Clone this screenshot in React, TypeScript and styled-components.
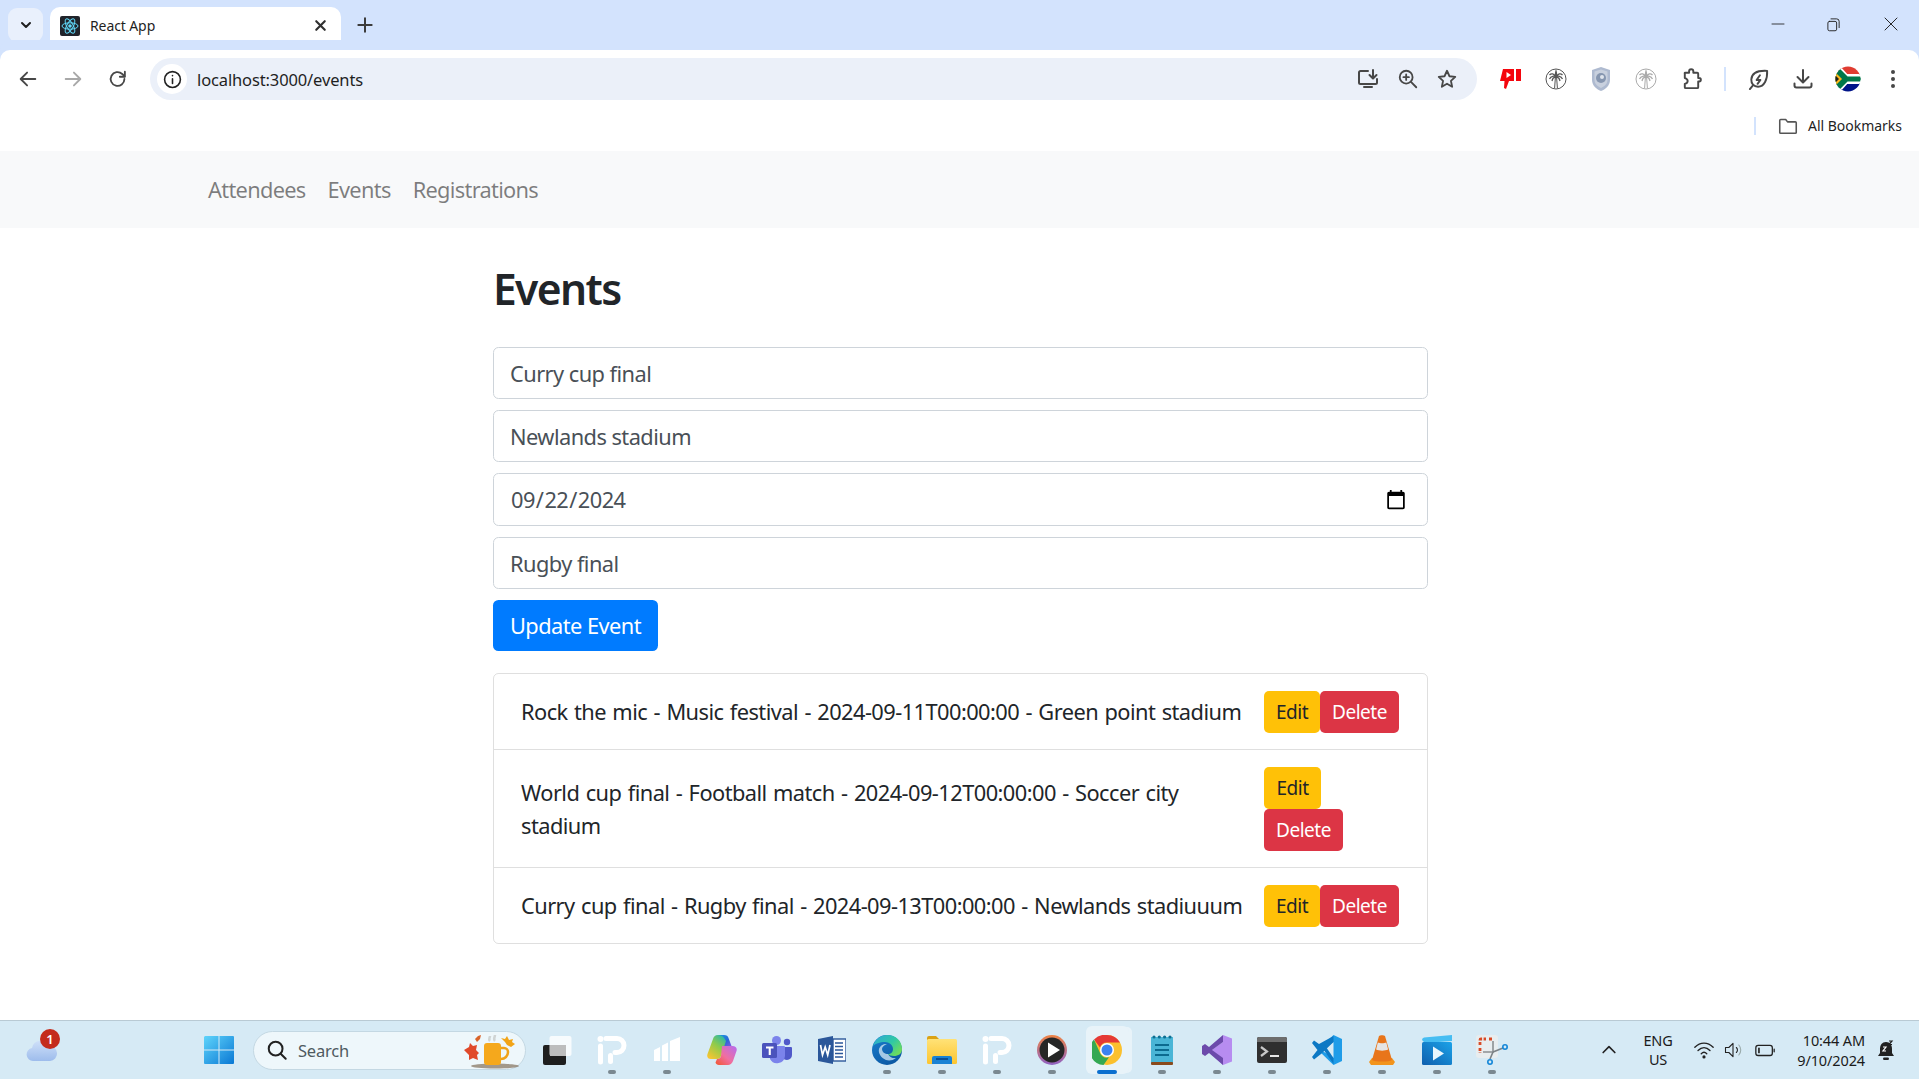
import React from 'react';
import styled, { createGlobalStyle } from 'styled-components';

const FONT = `"Noto Sans", "Open Sans", "Liberation Sans", sans-serif`;

const Global = createGlobalStyle`
  html, body { margin: 0; padding: 0; height: 100%; background: #fff; overflow: hidden; }
  #root { height: 100%; }
  * { box-sizing: border-box; }
  body { font-family: ${FONT}; }
`;

const Screen = styled.div`
  display: flex; flex-direction: column; width: 1919px; height: 1079px; overflow: hidden; background: #fff;
`;

/* ---------- browser chrome ---------- */
const TabStrip = styled.div`
  height: 50px; flex: none; background: #d3e3fd; display: flex; align-items: flex-end; padding-left: 8px;
`;
const TabSearch = styled.div`
  width: 35px; height: 34px; margin-bottom: 8px; border-radius: 9px; background: #e9f0fc;
  display: flex; align-items: center; justify-content: center;
`;
const Tab = styled.div`
  position: relative; width: 291px; height: 43px; margin-left: 7px; background: #fff; border-radius: 10px 10px 0 0;
  display: flex; align-items: center; padding: 0 0 6px 10px;
  &::before, &::after { content: ''; position: absolute; bottom: 0; width: 10px; height: 10px; }
  &::before { left: -10px; background: radial-gradient(circle at 0 0, #d3e3fd 10px, #fff 10.5px); }
  &::after { right: -10px; background: radial-gradient(circle at 100% 0, #d3e3fd 10px, #fff 10.5px); }
`;
const TabTitle = styled.span`
  margin-left: 10px; flex: 1; font-size: 14px; color: #1f1f1f; letter-spacing: -0.1px;
`;
const TabClose = styled.div`
  width: 20px; height: 20px; margin-right: 11px; display: flex; align-items: center; justify-content: center;
`;
const NewTab = styled.div`
  width: 28px; height: 28px; margin: 0 0 11px 10px; display: flex; align-items: center; justify-content: center;
`;
const WindowControls = styled.div`
  margin-left: auto; align-self: flex-start; display: flex; height: 48px;
`;
const WindowButton = styled.div`
  width: 56px; display: flex; align-items: center; justify-content: center;
  &:nth-child(-n+2) { padding-right: 3px; }
`;

const Toolbar = styled.div`
  height: 58px; flex: none; background: #fff; display: flex; align-items: center; padding: 0 3.5px 0 5.5px;
  border-radius: 10px 10px 0 0; box-shadow: 0 -10px 0 #d3e3fd; position: relative;
`;
const ToolCell = styled.div`
  width: 45px; height: 34px; flex: none; display: flex; align-items: center; justify-content: center;
`;
const AddressBar = styled.div`
  flex: 1; height: 42px; margin: 0 11.5px 0 9.5px; background: #ebf0f9; border-radius: 21px;
  display: flex; align-items: center; padding: 0 10px 0 7px;
`;
const InfoBubble = styled.div`
  width: 30px; height: 30px; border-radius: 50%; background: #fff; flex: none;
  display: flex; align-items: center; justify-content: center;
`;
const UrlText = styled.span`
  margin-left: 10px; flex: 1; font-size: 16.5px; color: #1f1f1f; letter-spacing: -0.13px;
`;
const AddressIcon = styled.div`
  width: 39.5px; height: 30px; flex: none; display: flex; align-items: center; justify-content: center;
`;
const ToolDivider = styled.div`
  width: 2px; height: 24px; margin: 0 10px; background: #d3e3fd; flex: none;
`;
const BookmarkBar = styled.div`
  height: 43px; flex: none; display: flex; align-items: center; justify-content: flex-end; padding: 0 17px 8px 0;
`;
const BookmarkDivider = styled.div`
  width: 2px; height: 18px; background: #d3e3fd; margin-right: 21px;
`;
const BookmarkLabel = styled.span`
  margin-left: 9px; font-size: 14px; color: #1f1f1f; letter-spacing: -0.02px;
`;

/* ---------- page ---------- */
const Page = styled.div`
  flex: 1; min-height: 0; overflow: hidden; color: #212529; font-size: 21.8px; line-height: 1.5;
`;
const NavBar = styled.nav`
  height: 77px; background: #f8f9fa; display: flex; align-items: center; gap: 22px; padding: 1px 0 0 208px;
`;
const NavLink = styled.a`
  color: rgba(0, 0, 0, 0.5); font-size: 21.8px; text-decoration: none; letter-spacing: -0.7px;
`;
const Container = styled.main`
  width: 935px; margin-left: 493px;
`;
const Title = styled.h2`
  margin: 35px 0 32px; font-size: 42.5px; line-height: 52px; font-weight: 600; color: #212529; letter-spacing: -1.6px;
`;
const Form = styled.form`
  display: flex; flex-direction: column; gap: 11px; align-items: flex-start;
`;
const Field = styled.input`
  width: 100%; height: ${p => p.$tall ? 53 : 52}px; padding: 0 16px; border: 1.4px solid #ced4da; border-radius: 5.5px;
  background: #fff; color: #495057; font-family: ${FONT}; font-size: 21.8px; letter-spacing: -0.55px; outline: none;
  &::-webkit-calendar-picker-indicator { width: 22px; height: 22px; margin: 0 4px 0 0; padding: 0; opacity: 1; }
`;
const PrimaryButton = styled.button`
  height: 51px; width: 165px; border: none; border-radius: 5.5px; background: #007bff; color: #fff;
  font-family: ${FONT}; font-size: 21.8px; letter-spacing: -0.55px; padding: 0;
`;
const EventList = styled.ul`
  list-style: none; margin: 22px 0 0; padding: 0; border: 1.4px solid rgba(0, 0, 0, 0.125); border-radius: 5.5px;
`;
const EventRow = styled.li`
  display: flex; align-items: center; gap: 16px; padding: 0 28px 0 27px; height: ${p => p.$h}px; color: #212529;
  & + & { border-top: 1.4px solid rgba(0, 0, 0, 0.125); }
`;
const EventText = styled.span`
  flex: 1; min-width: 0; letter-spacing: -0.55px; word-spacing: 1.25px; line-height: 33px;
`;
const Actions = styled.div`
  flex: none; width: 135px; display: flex; flex-wrap: wrap; align-items: flex-start;
`;
const SmallButton = styled.button`
  height: 42px; padding: 0; border: none; border-radius: 5px; font-family: ${FONT}; font-size: 19px; letter-spacing: -0.5px;
  width: ${p => p.$w}px; background: ${p => p.$danger ? '#dc3545' : '#ffc107'}; color: ${p => p.$danger ? '#fff' : '#212529'};
`;

/* ---------- taskbar ---------- */
const Taskbar = styled.footer`
  height: 59px; flex: none; background: #d6eaf5; border-top: 1px solid #b9cad4; display: flex; align-items: center;
`;
const Weather = styled.div`
  position: relative; width: 191px; height: 58px; flex: none; display: flex; align-items: center; padding-left: 25px;
`;
const Badge = styled.span`
  position: absolute; left: 40px; top: 8px; width: 20px; height: 20px; border-radius: 50%; background: #c42b1c; color: #fff;
  font-size: 13px; line-height: 20px; text-align: center; font-weight: 600;
`;
const AppCell = styled.div`
  position: relative; width: ${p => p.$w || 55}px; height: 58px; flex: none; display: flex; align-items: center; justify-content: center;
  &::before {
    content: ''; position: absolute; display: ${p => p.$active ? 'block' : 'none'}; left: 7px; right: 5px; top: 5px; height: 48px;
    border-radius: 6px; background: rgba(255, 255, 255, 0.45); box-shadow: 4px 0 0 -1px rgba(255, 255, 255, 0.45);
  }
  & > svg { position: relative; }
`;
const RunPill = styled.span`
  position: absolute; left: 50%; bottom: 5px; height: 4px; border-radius: 2px; transform: translateX(-50%);
  width: ${p => p.$active ? 20 : 8}px; background: ${p => p.$active ? '#0a6fcf' : '#7a8890'};
`;
const SearchBox = styled.div`
  width: 273px; height: 39px; margin: 0 3px 0 6px; flex: none; border-radius: 20px; background: #eef7fb; border: 1px solid #c4d8e3;
  display: flex; align-items: center; padding-left: 12px; position: relative;
`;
const SearchText = styled.span`
  margin-left: 10px; font-size: 16.5px; color: #4f5a60; letter-spacing: -0.2px; flex: 1;
`;
const Tray = styled.div`
  margin-left: auto; display: flex; align-items: center; height: 58px; padding-right: 22px;
`;
const Lang = styled.div`
  width: 44px; margin: 0 12px 0 17px; font-size: 14.5px; line-height: 19.5px; color: #1b1b1b; text-align: center; letter-spacing: -0.2px;
`;
const TrayIcon = styled.div`
  width: ${p => p.$w}px; height: 24px; display: flex; align-items: center; justify-content: center; flex: none;
`;
const Clock = styled.div`
  width: 85px; font-size: 14.5px; line-height: 20px; color: #1b1b1b; text-align: right; letter-spacing: -0.12px;
`;
const BellWrap = styled.div`
  margin-left: 10px; width: 22px; display: flex; justify-content: center;
`;

/* ---------- drawings ---------- */
type SvgP = { s?: number; c?: string };
const Ic = ({ s = 22, c = '#474747', w = 2, children }: any) => (
  <svg width={s} height={s} viewBox="0 0 24 24" fill="none" stroke={c} strokeWidth={w} strokeLinecap="round" strokeLinejoin="round">{children}</svg>
);
const ReactLogo = () => (
  <svg width="20" height="20" viewBox="0 0 20 20">
    <rect width="20" height="20" rx="2" fill="#20232a" />
    <circle cx="10" cy="10" r="1.8" fill="#61dafb" />
    <g fill="none" stroke="#61dafb" strokeWidth="1">
      <ellipse cx="10" cy="10" rx="8" ry="3.2" />
      <ellipse cx="10" cy="10" rx="8" ry="3.2" transform="rotate(60 10 10)" />
      <ellipse cx="10" cy="10" rx="8" ry="3.2" transform="rotate(120 10 10)" />
    </g>
  </svg>
);
const Palm = ({ c }: SvgP) => (
  <svg width="22" height="22" viewBox="0 0 22 22" fill="none" stroke={c} strokeWidth="1">
    <circle cx="11" cy="11" r="10" />
    <path d="M10.4 9.5 9.6 20M11.6 9.5l.8 10.5" />
    <path d="M11 9C9 5.5 6.5 5 4.5 7M11 9C9.5 7.5 6 8 4.5 11M11 9c-2 0-3.5 1.5-4 4M11 9c2-3.5 4.5-4 6.5-2M11 9c1.5-1.5 5-1 6.5 2M11 9c2 0 3.5 1.5 4 4M11 9c-.8-2-.8-4 0-6 .8 2 .8 4 0 6z" strokeWidth="1.3" />
  </svg>
);
const Flag = () => (
  <svg width="26" height="26" viewBox="0 0 26 26">
    <defs><clipPath id="flagClip"><circle cx="13" cy="13" r="12.5" /></clipPath></defs>
    <g clipPath="url(#flagClip)">
      <rect width="26" height="9" fill="#e03c31" />
      <rect y="17" width="26" height="9" fill="#001489" />
      <rect y="8" width="26" height="10" fill="#fff" />
      <path d="M0 0h5l9 10h12v6H14L5 26H0z" fill="#fff" />
      <path d="M0 2h2l10 10h14v2H12L2 24H0z" fill="#007749" strokeWidth="3" stroke="#007749" />
      <path d="M0 6l7 7-7 7z" fill="#ffb81c" />
      <path d="M0 9l4 4-4 4z" fill="#1c1c1c" />
    </g>
  </svg>
);
const WinLogo = () => (
  <svg width="30" height="30" viewBox="0 0 30 30">
    <defs><linearGradient id="winG" x1="0" y1="0" x2="1" y2="1"><stop offset="0" stopColor="#5fd4fb" /><stop offset="1" stopColor="#0a78d4" /></linearGradient></defs>
    <path d="M1 1h13.500v13.500H0V2zM15.500 1H29a1 1 0 0 1 1 1v12.500H15.500zM0 15.500h14.500V29H1a1 1 0 0 1-1-1zM15.500 15.500H30V28a1 1 0 0 1-1 1H15.500z" fill="url(#winG)" />
  </svg>
);
const Cloud = () => (
  <svg width="32" height="24" viewBox="0 0 32 24">
    <defs><linearGradient id="cloudG" x1="0" y1="0" x2="0" y2="1"><stop offset="0" stopColor="#cfe0f8" /><stop offset="1" stopColor="#9dbcec" /></linearGradient></defs>
    <path d="M8 23a6.500 6.500 0 0 1-1-12.900A9 9 0 0 1 24 8a7.500 7.500 0 0 1 1 15z" fill="url(#cloudG)" />
  </svg>
);
const Mug = () => (
  <svg width="60" height="38" viewBox="0 0 58 38" style={{ position: 'absolute', right: 3, top: 0 }}>
    <ellipse cx="32" cy="34" rx="24" ry="2.500" fill="#8f7f6e" opacity=".8" />
    <rect x="21" y="11" width="17" height="22" rx="3" fill="#f5a81c" />
    <path d="M38 16h3a4 4 0 0 1 4 4c0 4-3 7-7 7" fill="none" stroke="#f0a21a" strokeWidth="2.500" />
    <path d="M27 9c-2-2 0-3 0-5M32 9c-2-2 0-4 0-6" stroke="#d0d4d4" strokeWidth="2.500" fill="none" />
    <path d="M1 18l5-3 1-4 3 3 4-1-1 5 3 3-2 2 1 5-5-2-4 2 0-5z" fill="#e0492a" />
    <path d="M38 6l4 1 2-3 2 4 4-1-1 3 3 2-4 3-4-2-2-3z" fill="#f2a417" />
    <path d="M12 7l3-3 3-1-1 4-3 3z" fill="#d9642a" />
  </svg>
);
const TaskView = () => (
  <svg width="30" height="30" viewBox="0 0 30 30">
    <rect x="1" y="10" width="23" height="20" rx="2" fill="#1e1e1e" />
    <rect x="7.500" y="1" width="22" height="20" rx="2" fill="#fff" fillOpacity=".8" />
    <rect x="8" y="10" width="16" height="11" fill="#bdbdbd" />
  </svg>
);
const PLogo = () => (
  <svg width="30" height="30" viewBox="0 0 30 30" fill="#fff">
    <circle cx="3.500" cy="4" r="3" />
    <path d="M9 1h11a9.500 9.500 0 0 1 0 19h-2a2.500 2.500 0 0 1 0-5h2a4.500 4.500 0 0 0 0-9H9a2.500 2.500 0 0 1 0-5zM1 11a2.500 2.500 0 0 1 5 0v16a2.500 2.500 0 0 1-5 0z" />
    <rect x="11" y="18" width="5" height="11" rx="2.500" />
  </svg>
);
const Bars = () => (
  <svg width="26" height="26" viewBox="0 0 26 26" fill="#fff">
    <path d="M0 13l6-3v14H0zM8 8.500l6-3V24H8zM16 4l10-4v24H16z" />
  </svg>
);
const Copilot = () => (
  <svg width="30" height="30" viewBox="0 0 30 30">
    <defs>
      <linearGradient id="coA" x1="0" y1="0" x2="1" y2="1"><stop offset="0" stopColor="#1c9bde" /><stop offset=".6" stopColor="#2a66d9" /><stop offset="1" stopColor="#7d5be0" /></linearGradient>
      <linearGradient id="coB" x1=".8" y1="0" x2=".2" y2="1"><stop offset="0" stopColor="#2bb8a8" /><stop offset=".45" stopColor="#8fcb4a" /><stop offset="1" stopColor="#f7c531" /></linearGradient>
      <linearGradient id="coC" x1="1" y1="0" x2="0" y2="1"><stop offset="0" stopColor="#b56cf0" /><stop offset=".55" stopColor="#f06fa0" /><stop offset="1" stopColor="#f2562e" /></linearGradient>
    </defs>
    <path d="M11 0h6c2.500 0 4 1 4.500 3l3 8H14z" fill="url(#coA)" />
    <path d="M11 0C8 0 6.500 2 6 4L.5 19c-1 3 .5 5 3.500 5h6c2 0 3.500-1 4-3L19 6c-1-2-3-6-8-6z" fill="url(#coB)" />
    <path d="M15 11h10.500c3 0 5 2 4 5L26 26c-1 2.500-3 4-5 4h-9c-2 0-3-1-3.500-2.500L10 24c2.500 0 3.500-1 4-3z" fill="url(#coC)" />
  </svg>
);
const Teams = () => (
  <svg width="30" height="28" viewBox="0 0 30 28">
    <circle cx="14.500" cy="4.500" r="4.500" fill="#7b83eb" />
    <circle cx="25" cy="6" r="3.200" fill="#5059c9" />
    <path d="M20 11h9a1 1 0 0 1 1 1v7a5 5 0 0 1-5 5c-2 0-4-1-5-3z" fill="#5059c9" />
    <path d="M8 10h14a1 1 0 0 1 1 1v9a8 8 0 0 1-15 3z" fill="#7b83eb" />
    <rect y="7" width="15" height="15" rx="1.500" fill="#4b53bc" />
    <path d="M4 10.500h7.500v2H8.800V19H6.700v-6.500H4z" fill="#fff" />
  </svg>
);
const Word = () => (
  <svg width="28" height="28" viewBox="0 0 28 28">
    <path d="M0 3 15 0v28L0 25z" fill="#2b579a" />
    <rect x="15" y="3" width="13" height="22" fill="#fff" stroke="#2b579a" strokeWidth="1.400" />
    <path d="M17 7h8M17 10.500h8M17 14h8M17 17.500h8M17 21h8" stroke="#2b579a" strokeWidth="1.400" />
    <path d="M2.500 9 4.500 19 7.200 11l2.500 8L12 9" fill="none" stroke="#fff" strokeWidth="1.700" />
  </svg>
);
const Edge = () => (
  <svg width="30" height="30" viewBox="0 0 30 30">
    <defs>
      <linearGradient id="edA" x1="0" y1="0" x2="1" y2=".7"><stop offset="0" stopColor="#2fa7d9" /><stop offset=".6" stopColor="#30c8a5" /><stop offset="1" stopColor="#6fdc5c" /></linearGradient>
      <linearGradient id="edB" x1="0" y1="0" x2=".6" y2="1"><stop offset="0" stopColor="#1a7fcf" /><stop offset="1" stopColor="#0c59a4" /></linearGradient>
    </defs>
    <circle cx="15" cy="15" r="15" fill="url(#edB)" />
    <path d="M1 11C3 4 9 0 15 0c9 0 15 6 15 14 0 5-4 7-8 7-3 0-5-1-6-2 3 0 5-2 5-5 0-4-4-7-8-7C8 7 3 9 1 11z" fill="url(#edA)" />
    <path d="M16 19c-3 0-6-2-6-5 0-2 2-4 5-5-3-.5-7 1.500-8 5-1 4 2 9 7 11 3 1 7 .5 10-2-3 .5-6-.5-8-4z" fill="#d6eaf5" opacity=".75" />
  </svg>
);
const Folder = () => (
  <svg width="30" height="28" viewBox="0 0 30 28">
    <defs><linearGradient id="foG" x1="0" y1="0" x2="0" y2="1"><stop offset="0" stopColor="#ffe277" /><stop offset="1" stopColor="#fdc52f" /></linearGradient></defs>
    <path d="M0 2a2 2 0 0 1 2-2h7l4 4H0z" fill="#dba215" />
    <rect y="3" width="30" height="25" rx="1.500" fill="url(#foG)" />
    <path d="M5 28v-6a2 2 0 0 1 2-2h16a2 2 0 0 1 2 2v6z" fill="#1a82d4" />
    <rect x="9" y="22" width="12" height="2" fill="#0c4f95" />
  </svg>
);
const PlayBtn = () => (
  <svg width="30" height="30" viewBox="0 0 30 30">
    <defs><linearGradient id="plG" x1="0" y1="0" x2="0" y2="1"><stop offset="0" stopColor="#ee8344" /><stop offset="1" stopColor="#8f62c4" /></linearGradient></defs>
    <circle cx="15" cy="15" r="15" fill="url(#plG)" />
    <circle cx="15" cy="15" r="12.500" fill="#262626" />
    <path d="M11 7.500 23 15l-12 7.500z" fill="#fff" />
  </svg>
);
const Chrome = () => (
  <svg width="30" height="30" viewBox="0 0 30 30">
    <circle cx="15" cy="15" r="15" fill="#fbc02d" />
    <path d="M15 0a15 15 0 0 1 13 7.500H15a7.500 7.500 0 0 0-7 5L2 4.500A15 15 0 0 1 15 0z" fill="#e53935" />
    <path d="M2 4.500 8.500 19a7.500 7.500 0 0 0 8.500 3.300L11.500 30A15 15 0 0 1 2 4.500z" fill="#34a853" />
    <circle cx="15" cy="15" r="7" fill="#fff" />
    <circle cx="15" cy="15" r="5.500" fill="#3b82f0" />
  </svg>
);
const Notepad = () => (
  <svg width="22" height="30" viewBox="0 0 22 30">
    <rect y="2" width="22" height="26" fill="#4ab5d6" />
    <rect y="27" width="22" height="3" rx="1" fill="#8a4a1c" />
    <g fill="#0e6f92"><circle cx="3" cy="2" r="1.600" /><circle cx="8.300" cy="2" r="1.600" /><circle cx="13.600" cy="2" r="1.600" /><circle cx="19" cy="2" r="1.600" /></g>
    <path d="M4 10h14M4 15h14M4 20h14" stroke="#0c6a8f" strokeWidth="2" />
  </svg>
);
const VS = () => (
  <svg width="30" height="30" viewBox="0 0 30 30">
    <path d="M21 0l9 3.500v23L21 30l-14-13 14-10z" fill="#b78cf0" />
    <path d="M21 0 7 12l-4-3-3 2v8l3 2 4-3 14 12v-7L10 15 21 7z" fill="#6c4aab" />
  </svg>
);
const Terminal = () => (
  <svg width="30" height="26" viewBox="0 0 30 26">
    <rect width="30" height="26" rx="2" fill="#2f2f2f" />
    <path d="M0 2a2 2 0 0 1 2-2h26a2 2 0 0 1 2 2v3H0z" fill="#6d6d6d" />
    <path d="M4 10l6 4.500L4 19" fill="none" stroke="#c8c8c8" strokeWidth="2.200" />
    <rect x="13" y="18" width="9" height="2" fill="#e6e6e6" />
  </svg>
);
const VSCode = () => (
  <svg width="30" height="30" viewBox="0 0 30 30">
    <path d="M21.500 0 30 4v22l-8.500 4L6 15z" fill="#1f9ce8" />
    <path d="M21.500 7v16L9 15z" fill="#d6eaf5" />
    <path d="M7 9 2 5.500 0 8l5.500 7L0 22l2 2.500L9 19l12.500-12V1z" fill="#0c78c4" />
    <path d="M21.500 23v6L9 11l3-2z" fill="#0c78c4" />
  </svg>
);
const Vlc = () => (
  <svg width="26" height="30" viewBox="0 0 26 30">
    <path d="M0 27 3 23h20l3 4-2 3H2z" fill="#f2941c" />
    <path d="M10 1c1-1 5-1 6 0l7 24c-3 2-17 2-20 0z" fill="#e8751a" />
    <path d="M8.800 7.500c2 1 6.500 1 8.500 0l1.800 7c-3 1.500-9 1.500-12 0z" fill="#e5e5e5" />
  </svg>
);
const Clip = () => (
  <svg width="30" height="30" viewBox="0 0 30 30">
    <defs><linearGradient id="clG" x1="0" y1="1" x2="1" y2="0"><stop offset="0" stopColor="#0f5fae" /><stop offset="1" stopColor="#1ba2e8" /></linearGradient></defs>
    <path d="M0 5q0-2 2-2.500L30 0v6L3 8z" fill="#46bdf2" />
    <rect y="7" width="30" height="23" rx="1.500" fill="url(#clG)" />
    <path d="M11 11.500 22 18.500 11 25.500z" fill="#e8f6fd" />
  </svg>
);
const Snip = () => (
  <svg width="32" height="30" viewBox="0 0 32 30">
    <rect width="22" height="23" rx="3" fill="#e8edef" />
    <path d="M4 10V5q0-1 1-1h5M13 4h4" stroke="#d84a26" strokeWidth="2.800" fill="none" strokeDasharray="3 1.500" />
    <path d="M4 13v5" stroke="#d84a26" strokeWidth="2.800" strokeDasharray="3 1.500" />
    <path d="M17 6v11H7" stroke="#8b8f92" strokeWidth="1.600" fill="none" />
    <path d="M17 17l10-4M17 17l-3 7" stroke="#7b8185" strokeWidth="1.600" />
    <circle cx="29" cy="12" r="2.200" fill="none" stroke="#1487d8" strokeWidth="1.600" />
    <circle cx="14" cy="27" r="2.200" fill="none" stroke="#1487d8" strokeWidth="1.600" />
  </svg>
);

const apps: { el: React.ReactNode; run?: boolean; active?: boolean }[] = [
  { el: <TaskView /> },
  { el: <PLogo />, run: true },
  { el: <Bars />, run: true },
  { el: <Copilot /> },
  { el: <Teams /> },
  { el: <Word /> },
  { el: <Edge />, run: true },
  { el: <Folder />, run: true },
  { el: <PLogo />, run: true },
  { el: <PlayBtn />, run: true },
  { el: <Chrome />, run: true, active: true },
  { el: <Notepad />, run: true },
  { el: <VS />, run: true },
  { el: <Terminal />, run: true },
  { el: <VSCode />, run: true },
  { el: <Vlc />, run: true },
  { el: <Clip />, run: true },
  { el: <Snip />, run: true },
];

const events = [
  { text: 'Rock the mic - Music festival - 2024-09-11T00:00:00 - Green point stadium', h: 75, edit: 56 },
  { text: 'World cup final - Football match - 2024-09-12T00:00:00 - Soccer city stadium', h: 118, edit: 57 },
  { text: 'Curry cup final - Rugby final - 2024-09-13T00:00:00 - Newlands stadiuuum', h: 76, edit: 56 },
];

const noop = () => {};

export default function App() {
  return (
    <Screen>
      <Global />
      <TabStrip>
        <TabSearch>
          <Ic s={16} c="#1f1f1f" w={3}><path d="M6 9l6 6 6-6" /></Ic>
        </TabSearch>
        <Tab>
          <ReactLogo />
          <TabTitle>React App</TabTitle>
          <TabClose><Ic s={17} c="#303030" w={3}><path d="M6 6l12 12M18 6 6 18" /></Ic></TabClose>
        </Tab>
        <NewTab><Ic s={20} c="#3c3c3c" w={2.4}><path d="M12 4v16M4 12h16" /></Ic></NewTab>
        <WindowControls>
          <WindowButton><Ic s={16} c="#222" w={1.3}><path d="M3 12h18" /></Ic></WindowButton>
          <WindowButton><Ic s={15} c="#222" w={1.5}><rect x="3" y="7" width="14" height="15" rx="2.500" /><path d="M8 3h9a4 4 0 0 1 4 4v10" /></Ic></WindowButton>
          <WindowButton><Ic s={18} c="#222" w={1.3}><path d="M4 4l16 16M20 4 4 20" /></Ic></WindowButton>
        </WindowControls>
      </TabStrip>

      <Toolbar>
        <ToolCell><Ic s={22}><path d="M20 12H5M11 5l-7 7 7 7" /></Ic></ToolCell>
        <ToolCell><Ic s={22} c="#a8a8a8"><path d="M4 12h15M13 5l7 7-7 7" /></Ic></ToolCell>
        <ToolCell><Ic s={22}><path d="M19 12a7.500 7.500 0 1 1-2.400-5.500L19 9" /><path d="M19.500 4v5.500H14" /></Ic></ToolCell>
        <AddressBar>
          <InfoBubble>
            <Ic s={19} c="#222" w={2}><circle cx="12" cy="12" r="10" /><path d="M12 11v6M12 7v.2" /></Ic>
          </InfoBubble>
          <UrlText>localhost:3000/events</UrlText>
          <AddressIcon><Ic s={24}><path d="M12 4H4.500A1.500 1.500 0 0 0 3 5.500v10A1.500 1.500 0 0 0 4.500 17h15a1.500 1.500 0 0 0 1.500-1.500V12" /><path d="M8 20h8M17 3v8M13.500 8l3.500 3.500L20.500 8" /></Ic></AddressIcon>
          <AddressIcon><Ic s={22}><circle cx="10" cy="10" r="7" /><path d="M15.500 15.500 21 21M10 7v6M7 10h6" /></Ic></AddressIcon>
          <AddressIcon><Ic s={22}><path d="M12 3l2.700 6 6.300.7-4.700 4.300 1.300 6.500L12 17.200 6.400 20.500 7.700 14 3 9.700 9.300 9z" /></Ic></AddressIcon>
        </AddressBar>
        <ToolCell>
          <svg width="22" height="22" viewBox="0 0 22 22"><path d="M3 1h11v12H9l-3 8-2-1 .5-7H0zM16 1h5v12h-5z" fill="#f4060e" /><path d="M6.500 4v6l4.500-3z" fill="#fff" /></svg>
        </ToolCell>
        <ToolCell><Palm c="#555" /></ToolCell>
        <ToolCell>
          <svg width="18" height="24" viewBox="0 0 18 24"><path d="M9 0l9 3v10c0 5-4 9-9 11-5-2-9-6-9-11V3z" fill="#aebad0" /><path d="M9 2.500l6.500 2v8.500c0 3.500-3 6.500-6.500 8-3.500-1.500-6.500-4.500-6.500-8V4.500z" fill="#c8d0de" /><circle cx="9" cy="11" r="5" fill="#8696b0" /><circle cx="10" cy="10" r="2" fill="#dfe4ec" /></svg>
        </ToolCell>
        <ToolCell><Palm c="#aaa" /></ToolCell>
        <ToolCell><Ic s={23}><path d="M5 5h4.500V3.500a2.200 2.200 0 0 1 4.400 0V5H18a1 1 0 0 1 1 1v4.500h1a1.700 1.700 0 0 1 0 3.500h-1v6a1 1 0 0 1-1 1H6a1 1 0 0 1-1-1v-3.500c2-.5 3-1.600 3-3s-1-2.500-3-3V6a1 1 0 0 1 0-1z" /></Ic></ToolCell>
        <ToolDivider />
        <ToolCell><Ic s={23}><path d="M21 3c-9-.500-16 1-16.500 9-.2 4 2.500 7.500 7 7.500C18 19.500 21.500 12 21 3z" /><path d="M13.500 7.500l-3.500 5h4l-3 4M3 22l3-3.500" /></Ic></ToolCell>
        <ToolCell><Ic s={24}><path d="M12 3v12M6.500 10l5.500 5.500L17.500 10M3.500 16.500v2a2 2 0 0 0 2 2h13a2 2 0 0 0 2-2v-2" /></Ic></ToolCell>
        <ToolCell><Flag /></ToolCell>
        <ToolCell>
          <svg width="6" height="22" viewBox="0 0 6 22" fill="#474747"><circle cx="3" cy="4" r="2" /><circle cx="3" cy="11" r="2" /><circle cx="3" cy="18" r="2" /></svg>
        </ToolCell>
      </Toolbar>

      <BookmarkBar>
        <BookmarkDivider />
        <Ic s={22} c="#555" w={1.700}><path d="M3 6a1 1 0 0 1 1-1h5.500l2 2.500H20a1 1 0 0 1 1 1V19a1 1 0 0 1-1 1H4a1 1 0 0 1-1-1z" /></Ic>
        <BookmarkLabel>All Bookmarks</BookmarkLabel>
      </BookmarkBar>

      <Page>
        <NavBar>
          <NavLink href="#">Attendees</NavLink>
          <NavLink href="#">Events</NavLink>
          <NavLink href="#">Registrations</NavLink>
        </NavBar>
        <Container>
          <Title>Events</Title>
          <Form>
            <Field type="text" onChange={noop} value="Curry cup final" />
            <Field type="text" onChange={noop} value="Newlands stadium" />
            <Field type="date" $tall onChange={noop} value="2024-09-22" />
            <Field type="text" onChange={noop} value="Rugby final" />
            <PrimaryButton type="button">Update Event</PrimaryButton>
          </Form>
          <EventList>
            {events.map((ev, i) => (
              <EventRow key={i} $h={ev.h}>
                <EventText>{ev.text}</EventText>
                <Actions>
                  <SmallButton type="button" $w={ev.edit}>Edit</SmallButton>
                  <SmallButton type="button" $w={79} $danger>Delete</SmallButton>
                </Actions>
              </EventRow>
            ))}
          </EventList>
        </Container>
      </Page>

      <Taskbar>
        <Weather><Cloud /><Badge>1</Badge></Weather>
        <AppCell $w={56}><WinLogo /></AppCell>
        <SearchBox>
          <Ic s={22} c="#222" w={2.200}><circle cx="10.500" cy="10.500" r="7.500" /><path d="M16 16l5.500 5.500" /></Ic>
          <SearchText>Search</SearchText>
          <Mug />
        </SearchBox>
        {apps.map((a, i) => (
          <AppCell key={i} $active={a.active}>
            {a.el}
            {a.run && <RunPill $active={a.active} />}
          </AppCell>
        ))}
        <Tray>
          <Ic s={20} c="#222" w={2}><path d="M5 15l7-7 7 7" /></Ic>
          <Lang>ENG<br />US</Lang>
          <TrayIcon $w={24}><Ic s={22} c="#222" w={1.500}><path d="M2 9c6-6 14-6 20 0M5.500 12.500c4-4 9-4 13 0M9 16c2-2 4-2 6 0" /><circle cx="12" cy="19.500" r="1" fill="#222" /></Ic></TrayIcon>
          <TrayIcon $w={34}><Ic s={20} c="#222" w={1.300}><path d="M3 9v6h4l5 5V4L7 9z" /><path d="M16 9a4 4 0 0 1 0 6" /><path d="M19 6a9 9 0 0 1 0 12" stroke="#9aa" /></Ic></TrayIcon>
          <TrayIcon $w={30}><Ic s={22} c="#222" w={1.400}><rect x="2" y="7" width="18" height="11" rx="2.500" /><path d="M22 11v3" /><rect x="4.500" y="9.500" width="1.800" height="6" fill="#222" stroke="none" /></Ic></TrayIcon>
          <Clock>10:44 AM<br />9/10/2024</Clock>
          <BellWrap>
            <svg width="18" height="22" viewBox="0 0 18 22"><path d="M9 3c4 0 6 3 6 7v4l2 3H1l2-3v-4c0-4 2-7 6-7z" fill="#222" /><rect x="6" y="18.500" width="6" height="2.500" rx="1.200" fill="#222" /><path d="M6 8h3l-3 4h3" stroke="#fff" fill="none" strokeWidth="1.200" /><path d="M12 2h3l-3 3.500h3" stroke="#222" fill="none" strokeWidth="1.200" /></svg>
          </BellWrap>
        </Tray>
      </Taskbar>
    </Screen>
  );
}
